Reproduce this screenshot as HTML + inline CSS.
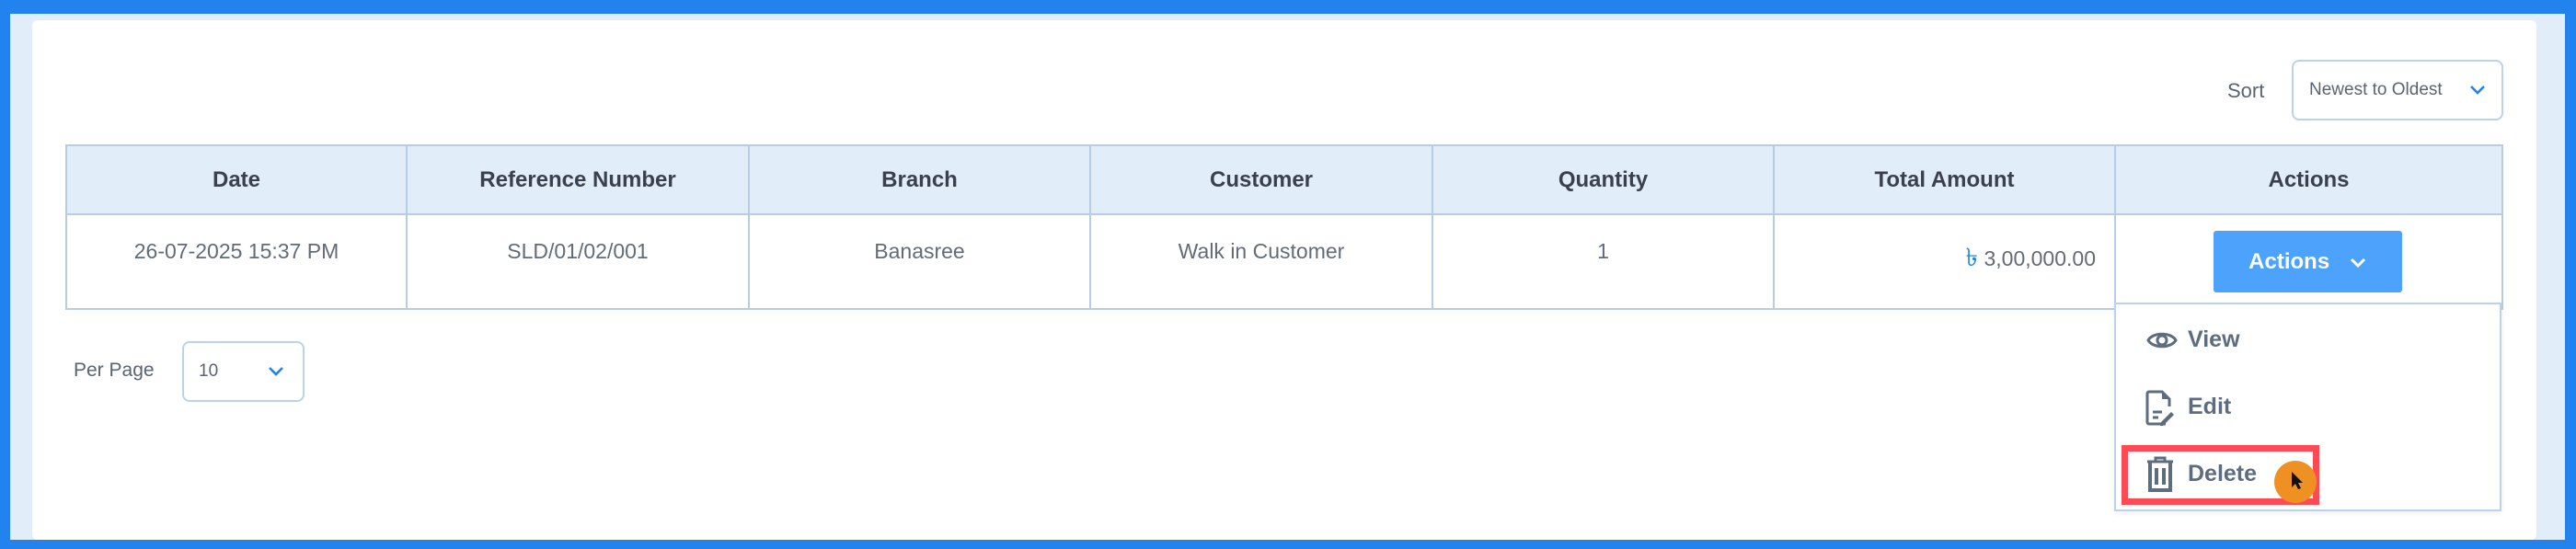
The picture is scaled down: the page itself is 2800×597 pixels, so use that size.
<!DOCTYPE html>
<html><head><style>
*{margin:0;padding:0;box-sizing:border-box}
body{width:2800px;height:597px;background:#2282ee;position:relative;overflow:hidden;font-family:"Liberation Sans","DejaVu Sans",sans-serif}
.bg{position:absolute;left:11px;top:15px;width:2777px;height:572px;background:#e2edfa}
.card{position:absolute;left:35px;top:22px;width:2722px;height:565px;background:#fff;border-radius:6px}
.abs{position:absolute}
table{position:absolute;left:71px;top:157px;width:2650px;border-collapse:collapse}
td,th{border:2px solid #b7cde6;text-align:center;vertical-align:top}
th{background:#e2edfa;height:75px;font-size:24px;font-weight:bold;color:#3a414c;vertical-align:middle}
td{height:103px;font-size:23px;color:#636b77;padding-top:26px}
.btn{position:absolute;left:2406px;top:251px;width:205px;height:67px;background:#4da3fb;border-radius:3px;color:#fff;font-weight:bold;font-size:24px;line-height:67px;text-align:center}
.menu{position:absolute;left:2298px;top:329px;width:421px;height:227px;background:#fff;border:2px solid #bcd1ea;box-shadow:0 2px 6px rgba(0,0,0,.06)}
.item{position:absolute;left:2378px;font-size:25px;font-weight:bold;color:#5d6c7f}
</style></head><body>
<div class="bg"></div>
<div class="card"></div>
<div class="abs" style="left:2421px;top:86px;font-size:22px;color:#5b6370">Sort</div>
<div class="abs" style="left:2491px;top:65px;width:230px;height:66px;border:2px solid #bcd1ea;border-radius:8px;font-size:19px;color:#5b6370;line-height:62px;padding-left:17px">Newest to Oldest
<svg class="abs" style="left:190px;top:24px" width="20" height="14" viewBox="0 0 20 14"><path d="M3 3l7 7 7-7" fill="none" stroke="#2282ee" stroke-width="2.6"/></svg></div>
<table>
<tr><th style="width:370px">Date</th><th style="width:372px">Reference Number</th><th style="width:371px">Branch</th><th style="width:372px">Customer</th><th style="width:371px">Quantity</th><th style="width:371px">Total Amount</th><th>Actions</th></tr>
<tr><td>26-07-2025 15:37 PM</td><td>SLD/01/02/001</td><td>Banasree</td><td>Walk in Customer</td><td>1</td><td style="text-align:right;padding-right:20px"><span style="color:#2282ee;font-size:27px">৳</span> 3,00,000.00</td><td></td></tr>
</table>
<div class="btn">Actions <svg style="margin-left:14px;vertical-align:middle" width="20" height="14" viewBox="0 0 20 14"><path d="M3 3l7 7 7-7" fill="none" stroke="#fff" stroke-width="3"/></svg></div>
<div class="menu"></div>
<svg class="abs" style="left:2333px;top:357px" width="34" height="26" viewBox="0 0 34 26"><path d="M2 13C7 4 27 4 32 13C27 22 7 22 2 13Z" fill="none" stroke="#5d6c7f" stroke-width="3"/><circle cx="17" cy="13" r="5" fill="none" stroke="#5d6c7f" stroke-width="3"/></svg>
<div class="item" style="top:355px">View</div>
<svg class="abs" style="left:2332px;top:424px" width="34" height="40" viewBox="0 0 34 40"><path d="M22 37H4a2 2 0 0 1-2-2V4a2 2 0 0 1 2-2h14l8 8v8" fill="none" stroke="#5d6c7f" stroke-width="3"/><path d="M18 2v8h8" fill="#5d6c7f"/><path d="M8 24h10M8 30h6" stroke="#5d6c7f" stroke-width="3"/><path d="M16 36l12-12 3 3-12 12h-3z" fill="#5d6c7f"/></svg>
<div class="item" style="top:428px">Edit</div>
<div class="abs" style="left:2306px;top:484px;width:215px;height:65px;border:7px solid #fd4a55"></div>
<svg class="abs" style="left:2333px;top:496px" width="30" height="40" viewBox="0 0 30 40"><path d="M1 6h28M10 6V2h10v4" fill="none" stroke="#5d6c7f" stroke-width="3"/><path d="M4 7v30h22V7" fill="none" stroke="#5d6c7f" stroke-width="4"/><path d="M11 13v18M19 13v18" stroke="#5d6c7f" stroke-width="4"/></svg>
<div class="item" style="top:501px">Delete</div>
<div class="abs" style="left:2472px;top:501px;width:46px;height:46px;border-radius:50%;background:#ef9022"></div>
<svg class="abs" style="left:2490px;top:512px" width="14" height="22" viewBox="0 0 14 22"><path d="M1 1v17l4-4 3 6 3-1-3-6h5z" fill="#111"/></svg>
<div class="abs" style="left:80px;top:391px;font-size:21px;color:#5b6370">Per Page</div>
<div class="abs" style="left:198px;top:371px;width:133px;height:66px;border:2px solid #bcd1ea;border-radius:8px;font-size:19px;color:#5b6370;line-height:62px;padding-left:16px">10
<svg class="abs" style="left:90px;top:24px" width="20" height="14" viewBox="0 0 20 14"><path d="M3 3l7 7 7-7" fill="none" stroke="#2282ee" stroke-width="2.6"/></svg></div>
</body></html>
